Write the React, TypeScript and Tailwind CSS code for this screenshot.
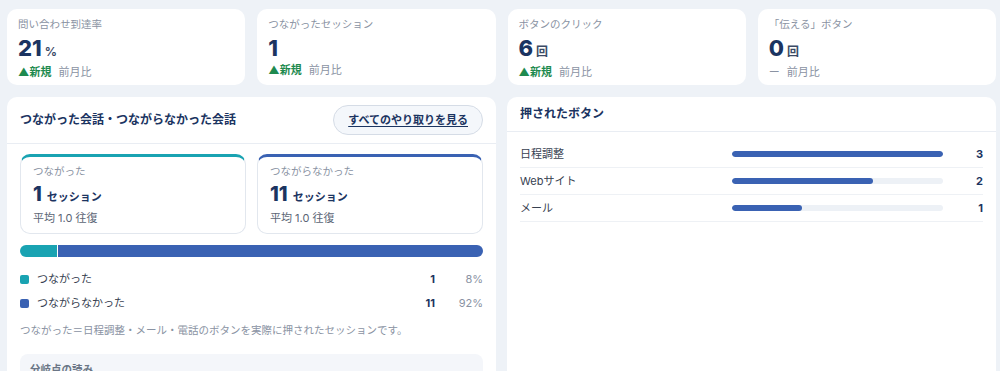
import React from 'react';

// 上部のKPIカード
const kpis = [
  { label: '問い合わせ到達率', value: '21', unit: '%', trend: 'new' },
  { label: 'つながったセッション', value: '1', unit: '', trend: 'new' },
  { label: 'ボタンのクリック', value: '6', unit: '回', trend: 'new' },
  { label: '「伝える」ボタン', value: '0', unit: '回', trend: 'flat' },
];

const pressed = [
  { name: '日程調整', count: 3 },
  { name: 'Webサイト', count: 2 },
  { name: 'メール', count: 1 },
];

const KpiCard = ({ kpi }: { kpi: (typeof kpis)[number] }) => (
  <div className="bg-white rounded-[10px] h-[76px] px-[11px] pt-[9px]">
    <div className="text-[10.5px] leading-[14px] text-[#8a93a3]">{kpi.label}</div>
    <div className="mt-[5px] flex items-baseline text-[#1b3461]">
      <span className="text-[22px] leading-[22px] font-extrabold">{kpi.value}</span>
      {kpi.unit && <span className="ml-[3px] text-[12px] font-bold text-[#3b4a66]">{kpi.unit}</span>}
    </div>
    <div className="mt-[4px] flex items-center text-[11px] leading-[15px]">
      {kpi.trend === 'new' ? (
        <span className="font-semibold text-[#1e8a4f]">▲新規</span>
      ) : (
        <span className="text-[#8a93a3]">ー</span>
      )}
      <span className="ml-[7px] text-[#8a93a3]">前月比</span>
    </div>
  </div>
);

const SessionCard = ({ label, value, color }: { label: string; value: string; color: string }) => (
  <div className={`h-[80px] rounded-[10px] border border-[#e2e7ee] border-t-[3px] px-[12px] pt-[8px] ${color}`}>
    <div className="text-[10.5px] leading-[13px] text-[#8a93a3]">{label}</div>
    <div className="mt-[6px] flex items-baseline text-[#1b3461]">
      <span className="text-[20px] leading-[20px] font-extrabold">{value}</span>
      <span className="ml-[5px] text-[11px] font-bold">セッション</span>
    </div>
    <div className="mt-[5px] text-[11px] leading-[15px] text-[#5b6575]">平均 1.0 往復</div>
  </div>
);

const ConversationPanel = () => (
  <section className="bg-white rounded-[10px] min-h-[280px]">
    <div className="h-[47px] px-[13px] flex items-center justify-between border-b border-[#e9edf3]">
      <h2 className="text-[12px] font-bold text-[#1b3461]">つながった会話・つながらなかった会話</h2>
      <button className="h-[30px] px-[14px] rounded-full border border-[#d5dce6] bg-[#f4f7fb] text-[11px] font-bold text-[#1b3461] underline underline-offset-2">
        すべてのやり取りを見る
      </button>
    </div>
    <div className="px-[13px] pt-[10px]">
      <div className="grid grid-cols-2 gap-[11px]">
        <SessionCard label="つながった" value="1" color="border-t-[#19a3b2]" />
        <SessionCard label="つながらなかった" value="11" color="border-t-[#3a62b3]" />
      </div>
      <div className="mt-[11px] h-[12px] rounded-full overflow-hidden flex gap-[1px] bg-white">
        <div className="w-[8%] bg-[#19a3b2]" />
        <div className="flex-1 bg-[#3a62b3]" />
      </div>
      <div className="mt-[10px] text-[11px]">
        <div className="h-[24px] flex items-center">
          <span className="w-[9px] h-[9px] rounded-[2px] bg-[#19a3b2]" />
          <span className="ml-[8px] flex-1 text-[#374151]">つながった</span>
          <span className="font-bold text-[#1b3461]">1</span>
          <span className="w-[48px] text-right text-[#8a93a3]">8%</span>
        </div>
        <div className="h-[24px] flex items-center">
          <span className="w-[9px] h-[9px] rounded-[2px] bg-[#3a62b3]" />
          <span className="ml-[8px] flex-1 text-[#374151]">つながらなかった</span>
          <span className="font-bold text-[#1b3461]">11</span>
          <span className="w-[48px] text-right text-[#8a93a3]">92%</span>
        </div>
      </div>
      <p className="mt-[8px] text-[10.5px] leading-[16px] text-[#8a93a3]">
        つながった＝日程調整・メール・電話のボタンを実際に押されたセッションです。
      </p>
      <div className="mt-[15px] rounded-[8px] bg-[#f4f6fa] px-[10px] pt-[8px] pb-[10px]">
        <div className="text-[10.5px] font-bold text-[#6b7686]">分岐点の読み</div>
      </div>
    </div>
  </section>
);

const PressedPanel = () => {
  const max = Math.max(...pressed.map((p) => p.count));
  return (
    <section className="bg-white rounded-[10px]">
      <div className="h-[35px] px-[13px] flex items-center border-b border-[#e9edf3]">
        <h2 className="text-[12px] font-bold text-[#1b3461]">押されたボタン</h2>
      </div>
      <div className="px-[13px] pt-[9px]">
        {pressed.map((p) => (
          <div key={p.name} className="h-[27px] flex items-center border-b border-[#eef1f5] text-[11px]">
            <span className="flex-1 text-[#374151]">{p.name}</span>
            <div className="w-[211px] h-[6px] rounded-full bg-[#edf1f6] overflow-hidden">
              <div className="h-full rounded-full bg-[#3a62b3]" style={{ width: `${(p.count / max) * 100}%` }} />
            </div>
            <span className="w-[40px] text-right font-bold text-[#1b3461]">{p.count}</span>
          </div>
        ))}
      </div>
    </section>
  );
};

const App = () => {
  return (
    <div className="min-h-screen bg-[#eef2f7] pl-[7px] pr-[4px] pt-[9px] font-[Inter,'Noto_Sans_CJK_JP',sans-serif]">
      <div className="grid grid-cols-4 gap-3">
        {kpis.map((k) => (
          <KpiCard key={k.label} kpi={k} />
        ))}
      </div>
      <div className="mt-[12px] grid grid-cols-2 gap-[11px]">
        <ConversationPanel />
        <PressedPanel />
      </div>
    </div>
  );
};

export default App;
